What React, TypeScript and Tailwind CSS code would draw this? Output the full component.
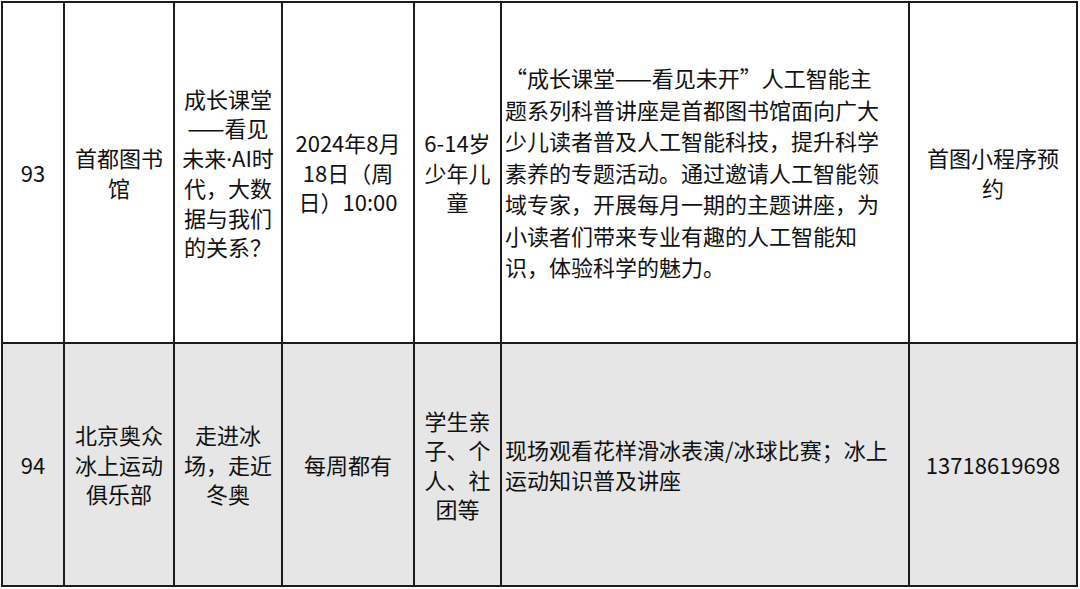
const rows = [
  {
    bg: "bg-white",
    cells: [
      ["93"],
      ["首都图书", "馆"],
      ["成长课堂", "——看见", "未来·AI时", "代，大数", "据与我们", "的关系？"],
      ["2024年8月", "18日（周", "日）10:00"],
      ["6-14岁", "少年儿", "童"],
      [
        "“成长课堂——看见未开”人工智能主",
        "题系列科普讲座是首都图书馆面向广大",
        "少儿读者普及人工智能科技，提升科学",
        "素养的专题活动。通过邀请人工智能领",
        "域专家，开展每月一期的主题讲座，为",
        "小读者们带来专业有趣的人工智能知",
        "识，体验科学的魅力。",
      ],
      ["首图小程序预", "约"],
    ],
  },
  {
    bg: "bg-[#e6e6e6]",
    cells: [
      ["94"],
      ["北京奥众", "冰上运动", "俱乐部"],
      ["走进冰", "场，走近", "冬奥"],
      ["每周都有"],
      ["学生亲", "子、个", "人、社", "团等"],
      ["现场观看花样滑冰表演/冰球比赛；冰上", "运动知识普及讲座"],
      ["13718619698"],
    ],
  },
];

// the middle dot should stay narrow, so it takes a latin face
function Line({ text }: { text: string }) {
  const parts = text.split("·");
  if (parts.length === 1) return <>{text}</>;
  return (
    <>
      {parts[0]}
      <span className="font-['Noto_Sans']">·</span>
      {parts[1]}
    </>
  );
}

export default function App() {
  return (
    <div className="w-[1080px] h-[589px] bg-white pl-px pt-px">
      <div
        className="grid w-fit grid-cols-[60px_108px_106px_130px_85px_406px_166px] grid-rows-[339px_241px] gap-[2px] bg-[#1c1c1c] p-[2px] text-[22px] leading-[29.5px] text-[#111]"
        style={{ fontFamily: '"Noto Sans CJK SC", "Noto Sans", sans-serif' }}
      >
        {rows.map((row, r) =>
          row.cells.map((lines, c) => (
            <div
              key={r + "-" + c}
              className={
                row.bg +
                " flex flex-col justify-center " +
                (c === 5 ? "items-start pl-[3px]" : "items-center text-center") +
                (c === 5 && r === 0 ? " leading-[31.5px]" : "")
              }
            >
              {lines.map((line, i) => (
                <div key={i} className="whitespace-nowrap">
                  <Line text={line} />
                </div>
              ))}
            </div>
          ))
        )}
      </div>
    </div>
  );
}
